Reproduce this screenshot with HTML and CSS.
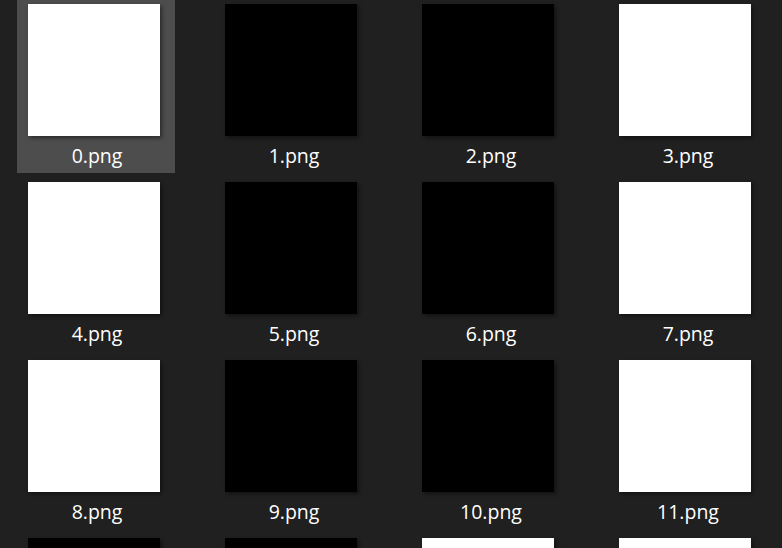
FILE: index.html
```html
<!DOCTYPE html>
<html>
<head>
<meta charset="utf-8">
<link rel="stylesheet" href="styles.css">
</head>
<body>
<div class="grid">
  <div class="tile selected"><div class="thumb white"></div><div class="label">0.png</div></div>
  <div class="tile"><div class="thumb black"></div><div class="label">1.png</div></div>
  <div class="tile"><div class="thumb black"></div><div class="label">2.png</div></div>
  <div class="tile"><div class="thumb white"></div><div class="label">3.png</div></div>
  <div class="tile"><div class="thumb white"></div><div class="label">4.png</div></div>
  <div class="tile"><div class="thumb black"></div><div class="label">5.png</div></div>
  <div class="tile"><div class="thumb black"></div><div class="label">6.png</div></div>
  <div class="tile"><div class="thumb white"></div><div class="label">7.png</div></div>
  <div class="tile"><div class="thumb white"></div><div class="label">8.png</div></div>
  <div class="tile"><div class="thumb black"></div><div class="label">9.png</div></div>
  <div class="tile"><div class="thumb black"></div><div class="label">10.png</div></div>
  <div class="tile"><div class="thumb white"></div><div class="label">11.png</div></div>
  <div class="tile"><div class="thumb black"></div><div class="label">12.png</div></div>
  <div class="tile"><div class="thumb black"></div><div class="label">13.png</div></div>
  <div class="tile"><div class="thumb white"></div><div class="label">14.png</div></div>
  <div class="tile"><div class="thumb white"></div><div class="label">15.png</div></div>
</div>
</body>
</html>
```
FILE: styles.css
```css
html, body {
  margin: 0;
  padding: 0;
  background: #202020;
  overflow: hidden;
  height: 548px;
}
.grid {
  display: grid;
  grid-template-columns: repeat(4, 158px);
  column-gap: 39px;
  row-gap: 5px;
  padding-left: 17px;
}
.tile {
  height: 173px;
  padding-top: 4px;
  box-sizing: border-box;
  display: flex;
  flex-direction: column;
}
.tile.selected {
  background: #4d4d4d;
}
.thumb {
  width: 132px;
  height: 132px;
  margin-left: 11px;
  box-shadow: 2px 2px 4px rgba(0, 0, 0, 0.45);
}
.thumb.white { background: #ffffff; }
.thumb.black { background: #000000; }
.label {
  color: #ffffff;
  font-family: "Open Sans", "Noto Sans", sans-serif;
  font-size: 19.5px;
  line-height: 24px;
  text-align: center;
  margin-top: 8px;
  padding-left: 2px;
}
```
